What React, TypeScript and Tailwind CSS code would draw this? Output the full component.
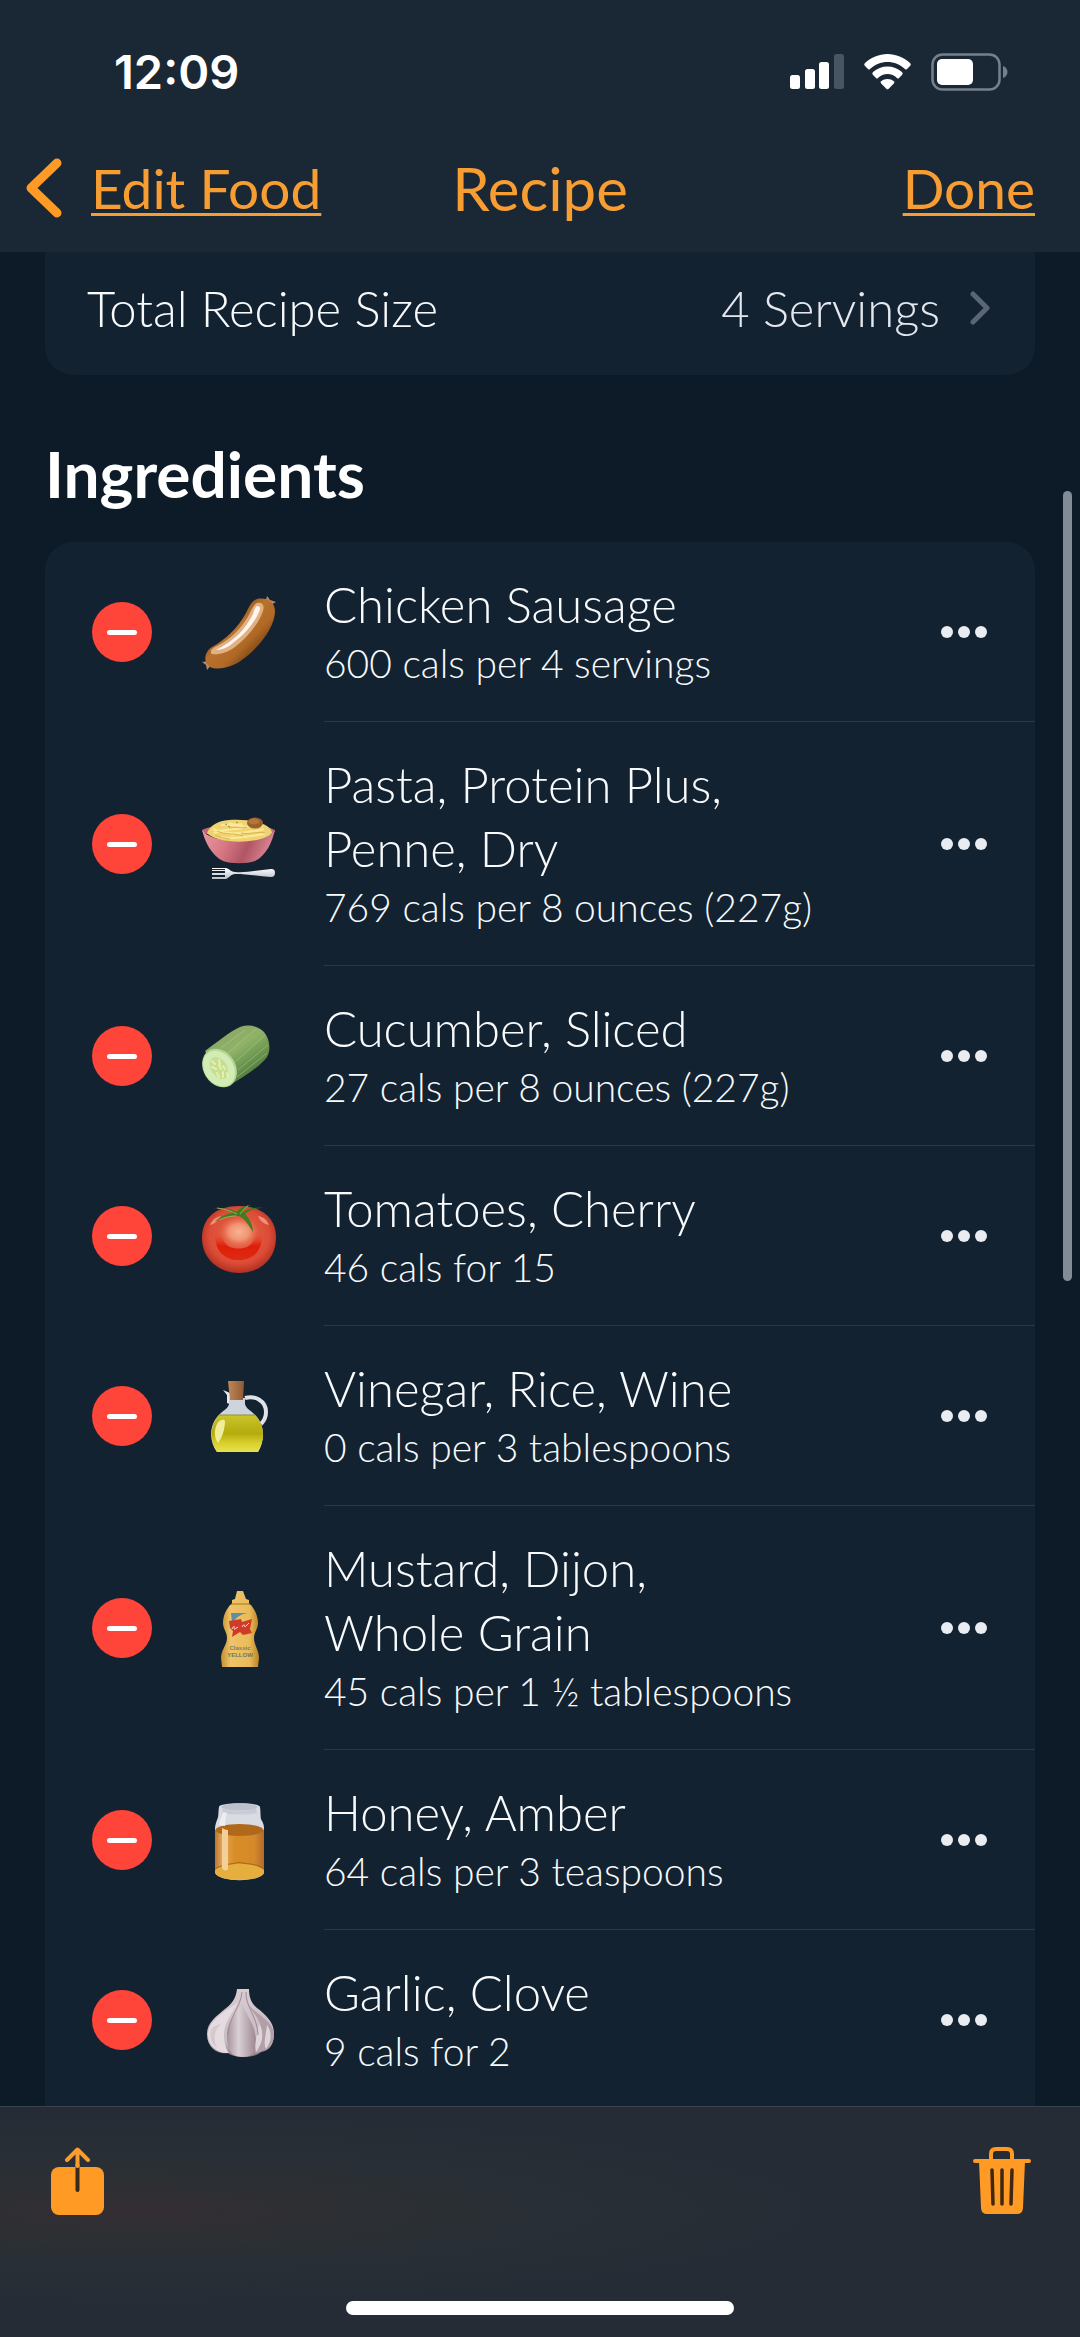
import { ReactNode, useState } from "react";

interface Ingredient {
  id: number;
  lines: string[];
  amount: string;
  icon: ReactNode;
}

const SausageIcon = () => (
  <svg viewBox="0 0 76 76" className="h-[76px] w-[76px]" aria-hidden="true">
    <defs>
      <linearGradient id="sausage" x1="0.25" y1="0.25" x2="0.8" y2="0.8">
        <stop offset="0" stopColor="#7a4517" />
        <stop offset="0.35" stopColor="#b9722c" />
        <stop offset="0.65" stopColor="#b06a26" />
        <stop offset="1" stopColor="#6d3a10" />
      </linearGradient>
    </defs>
    <path d="M64 9 66 2l3 4 6 2-7 4zM8 67l-7 1 4 3 1 5 5-6z" fill="#b98a6c" />
    <path d="M56 5c10-2 18 3 18 12 0 14-12 32-29 46-12 10-27 14-36 10-7-4-6-15 2-20C25 45 36 35 45 19c3-6 5-12 11-14z" fill="url(#sausage)" />
    <path d="M56 9c5-1 8 2 6 8-4 12-15 26-28 36-8 6-17 8-23 7-3-2 0-6 5-8 14-7 25-18 33-33 2-4 4-9 7-10z" fill="#e0b184" />
    <path d="M56 12c3 0 4 2 2 6-5 12-15 23-26 31-6 5-12 7-17 7 18-9 29-20 37-36 1-3 2-7 4-8z" fill="#fff6ee" />
  </svg>
);

const PastaIcon = () => (
  <svg viewBox="0 0 76 76" className="h-[76px] w-[76px]" aria-hidden="true">
    <defs>
      <linearGradient id="bowl" x1="0" y1="0" x2="1" y2="0.2">
        <stop offset="0" stopColor="#e99aa3" />
        <stop offset="0.4" stopColor="#d67782" />
        <stop offset="0.7" stopColor="#b05564" />
        <stop offset="1" stopColor="#d88591" />
      </linearGradient>
      <linearGradient id="fork" x1="0" y1="0" x2="0" y2="1">
        <stop offset="0" stopColor="#ffffff" />
        <stop offset="1" stopColor="#b9bfcb" />
      </linearGradient>
    </defs>
    <ellipse cx="37.500" cy="25" rx="36.500" ry="6" fill="#c06a76" />
    <path d="M1 23c2 12 10 27 21 32 8 3 24 3 32 0 11-5 18-20 20-32-5 16-68 16-73 0z" fill="url(#bowl)" />
    <path d="M6 27c3-8 11-12 22-13 10-1 22 0 31 3 7 2 12 6 12 10-9 11-55 12-65 0z" fill="#efd370" />
    <path d="M13 27c10-5 20-3 29-5M20 31c14 3 29-1 44-3M20 19c10-2 22 4 42 1M12 23c9 4 24 6 40 2M30 29c8-3 23-2 33-6M28 17c4 2 9 2 13 1" fill="none" stroke="#fbe898" strokeWidth="2" />
    <path d="M16 25c8 4 17 2 26 5M40 27c8 2 16-2 24 0M28 22c6-2 12 1 18-1M14 29c6 3 10 3 15 4" fill="none" stroke="#d9b751" strokeWidth="1" />
    <path d="m24 18 2 1m9-3 2 1m-10 3 2 1" stroke="#8f8f4a" strokeWidth="1" />
    <ellipse cx="54" cy="17" rx="8" ry="5.500" fill="#99602c" />
    <ellipse cx="53" cy="15.500" rx="5.500" ry="3" fill="#b0763a" />
    <path d="M11 62h14c4 1 5 4 9 4 12 1 24-2 36-3 3 0 4 1 4 4 0 2-1 4-4 4-12-1-24-3-36-3-4 0-6 4-9 5H11v-2h13v-2H11v-2h13v-2H11v-1h13v-1H11z" fill="url(#fork)" />
  </svg>
);

const CucumberIcon = () => (
  <svg viewBox="0 0 76 76" className="h-[76px] w-[76px]" aria-hidden="true">
    <defs>
      <linearGradient id="cucumber" x1="0.3" y1="0.1" x2="0.8" y2="0.8">
        <stop offset="0" stopColor="#8aa866" />
        <stop offset="0.4" stopColor="#8fb268" />
        <stop offset="0.7" stopColor="#6c9650" />
        <stop offset="1" stopColor="#4a7639" />
      </linearGradient>
    </defs>
    <path d="M4 33C14 26 29 13 39 9c9-3 18-1 24 5 6 7 7 18 3 25C58 50 40 60 28 68z" fill="url(#cucumber)" />
    <path d="M20 30 44 12M27 35l28-24M34 44l30-27M37 52l30-25M36 59l30-24" fill="none" stroke="#b4cf8a" strokeWidth="1" strokeOpacity="0.5" />
    <ellipse cx="18.500" cy="50" rx="16" ry="20.500" transform="rotate(-32 18.500 50)" fill="#b5d79b" />
    <ellipse cx="18" cy="50.500" rx="14.500" ry="19" transform="rotate(-32 18 50.500)" fill="#d3ecb6" />
    <ellipse cx="18" cy="50" rx="8" ry="12" transform="rotate(-32 18 50)" fill="#c4df95" />
    <path d="m11 43 3 3m4-4 1 4m-8 3 4 2m7-3 2 3m-8 4 2 4m4-5v5m4-4 1 4m-9-12 2 4" stroke="#e6f0a8" strokeWidth="2" strokeLinecap="round" />
  </svg>
);

const TomatoIcon = () => (
  <svg viewBox="0 0 76 76" className="h-[76px] w-[76px]" aria-hidden="true">
    <defs>
      <radialGradient id="tomato" cx="0.5" cy="0.45" r="0.58">
        <stop offset="0" stopColor="#e8684c" />
        <stop offset="0.7" stopColor="#dc4c36" />
        <stop offset="1" stopColor="#a92a1e" />
      </radialGradient>
      <radialGradient id="tomatoShine" cx="0.5" cy="0.5" r="0.5">
        <stop offset="0" stopColor="#f7b390" />
        <stop offset="0.5" stopColor="#f19474" />
        <stop offset="1" stopColor="#e8684c" stopOpacity="0" />
      </radialGradient>
      <linearGradient id="tomatoRing" x1="0" y1="0" x2="0" y2="1">
        <stop offset="0" stopColor="#e2543b" stopOpacity="0" />
        <stop offset="0.5" stopColor="#e01e08" />
        <stop offset="1" stopColor="#dd2a12" />
      </linearGradient>
    </defs>
    <path d="M38 8c24 0 37 13 37 31 0 23-17 36-37 36S1 61 1 40C1 20 15 8 38 8z" fill="url(#tomato)" />
    <path d="M14 34c5 0 7 4 9 9 3 10 26 10 29 0 1-5 4-9 9-9 1 16-6 28-23 28S13 50 14 34z" fill="url(#tomatoRing)" />
    <ellipse cx="38" cy="34" rx="20" ry="16" fill="url(#tomatoShine)" />
    <path d="M9 27c2-5 6-8 11-9-2 4-6 8-11 9zM57 18c6 1 9 4 11 9-5-1-9-4-11-9z" fill="#ef9078" />
    <path d="M11 10c9 0 18 0 25 4 1-3 6-6 14-7-5 2-8 5-9 8 6-5 13-6 22-5-9 0-15 2-19 6 5 5 8 12 8 18-4-7-9-14-14-16-8-2-16 2-24 6 5-6 12-8 18-9-7-4-14-5-21-5z" fill="#3f7d22" />
    <path d="M16 10c8 1 14 3 20 6m-18 6c6-3 12-4 17-4m4-2c3-4 5-6 8-8" fill="none" stroke="#8bb552" strokeWidth="1" />
  </svg>
);

const VinegarIcon = () => (
  <svg viewBox="0 0 76 76" className="h-[76px] w-[76px]" aria-hidden="true">
    <defs>
      <linearGradient id="oil" x1="0" y1="0" x2="0" y2="1">
        <stop offset="0" stopColor="#c9c52c" />
        <stop offset="0.5" stopColor="#b5ab0d" />
        <stop offset="0.75" stopColor="#d8cf2d" />
        <stop offset="1" stopColor="#e7e24c" />
      </linearGradient>
      <linearGradient id="cork" x1="0" y1="0" x2="1" y2="0">
        <stop offset="0" stopColor="#c08758" />
        <stop offset="1" stopColor="#8f5a34" />
      </linearGradient>
    </defs>
    <path d="M44 20c10-3 21 3 21 14 0 5-2 9-5 12" fill="none" stroke="#dfe4ea" strokeWidth="4" />
    <path d="m22 12 7 3v11l-3-1v-8z" fill="#e8edf3" />
    <path d="M28 20h16v6c1 5 7 7 11 12 9 10 9 24 2 36H16C8 63 8 48 17 38c4-5 10-7 11-12z" fill="#cdd4dd" />
    <path d="M18 37h36c10 10 10 25 3 37H16C8 62 9 47 18 37z" fill="url(#oil)" />
    <path d="M18 37h36" stroke="#8e9231" strokeWidth="1" />
    <path d="M16 46c3-5 7-5 8-3 0 8-3 17-7 22-4-5-4-13-1-19z" fill="#f0ee9b" />
    <path d="M27 3h16l-1 19H29z" fill="url(#cork)" />
  </svg>
);

const MustardIcon = () => (
  <svg viewBox="0 0 76 76" className="h-[76px] w-[76px] overflow-visible" aria-hidden="true">
    <defs>
      <linearGradient id="mustard" x1="0" y1="0" x2="1" y2="0">
        <stop offset="0" stopColor="#c38e2d" />
        <stop offset="0.25" stopColor="#efc468" />
        <stop offset="0.75" stopColor="#e9bb5a" />
        <stop offset="1" stopColor="#b88325" />
      </linearGradient>
    </defs>
    <path d="M36 1h6l3 8 3 1v4l2 1c4 5 7 11 7 18 0 6-4 9-4 15 0 7 5 12 5 20l-1 9H21l-1-9c0-8 6-13 6-20 0-6-4-9-4-15 0-7 3-13 7-18l2-1v-4l3-1z" fill="url(#mustard)" />
    <path d="M30 14h19" stroke="#a87622" strokeWidth="1" />
    <path d="M30 23h17c-8 1-12 5-16 10z" fill="#5f8da6" />
    <path d="m28 31 12-2 1 3 10-3-2 10 2 4-9 2-3-3-8 5 1-6-3-3z" fill="#cf3b28" />
    <path d="M31 39c4-7 1 2 3 0l3-2m4 0c4-6 1 2 4-1l3-3" fill="none" stroke="#f6d8c8" strokeWidth="1" />
    <text x="39" y="60" textAnchor="middle" fontFamily="Liberation Sans, sans-serif" fontSize="6" fontWeight="700" fill="#7d7c60">Classic</text>
    <text x="39" y="67" textAnchor="middle" fontFamily="Liberation Sans, sans-serif" fontSize="6" fontWeight="700" fill="#6c7668">YELLOW</text>
  </svg>
);

const HoneyIcon = () => (
  <svg viewBox="0 0 76 76" className="h-[76px] w-[76px] overflow-visible" aria-hidden="true">
    <defs>
      <linearGradient id="honey" x1="0" y1="0" x2="1" y2="0">
        <stop offset="0" stopColor="#b8772e" />
        <stop offset="0.15" stopColor="#e7a85a" />
        <stop offset="0.4" stopColor="#d98d26" />
        <stop offset="0.8" stopColor="#d58a2a" />
        <stop offset="1" stopColor="#b06b2a" />
      </linearGradient>
    </defs>
    <path d="M18 5c0-5 41-5 41 0 1 8 0 11 2 14 2 4 2 5 2 8v43c-2 11-47 11-49 0V27c0-4 1-6 2-9 2-4 1-7 2-13z" fill="#dadce3" />
    <ellipse cx="38.500" cy="5" rx="18" ry="3.500" fill="#bcc1cb" />
    <path d="M22 6c8 4 26 4 33 0l1 5c-9 2-26 2-35 0z" fill="#c8ccd5" />
    <path d="M14 28h49v42c-2 10-47 10-49 0z" fill="url(#honey)" />
    <ellipse cx="38.500" cy="28" rx="24" ry="6" fill="#b0691a" />
    <path d="M14 68c8-8 41-8 49 0v3c-3 9-46 9-49 0z" fill="#e6ae3d" />
    <path d="M14 67c8-5 17-5 21-6 2-1 4-1 6 0 8 1 15 1 22 6" fill="none" stroke="#a5661b" strokeWidth="1" />
    <path d="M21 26c2 1 4 2 6 2v38c0 4-6 3-6-1z" fill="#f3cf9a" />
    <path d="M22 10c-1 6-4 8-4 13l6 1c1-5 0-8 2-13z" fill="#eceef2" />
  </svg>
);

const GarlicIcon = () => (
  <svg viewBox="0 0 76 76" className="h-[76px] w-[76px]" aria-hidden="true">
    <defs>
      <linearGradient id="garlic" x1="0" y1="0" x2="0" y2="1">
        <stop offset="0" stopColor="#d9cdd2" />
        <stop offset="0.5" stopColor="#cdbfc6" />
        <stop offset="0.8" stopColor="#c5bcc1" />
        <stop offset="1" stopColor="#8a6f78" />
      </linearGradient>
      <linearGradient id="clove" x1="0" y1="0" x2="1" y2="0">
        <stop offset="0" stopColor="#a8929b" />
        <stop offset="0.4" stopColor="#d9d0d5" />
        <stop offset="1" stopColor="#9d8791" />
      </linearGradient>
    </defs>
    <path d="M36 7h12c0 8 2 14 8 19 8 6 17 14 17 25 0 10-4 18-13 19-6 6-26 7-33 1C17 73 6 66 6 52c0-12 10-18 18-25 7-5 11-11 12-20z" fill="url(#garlic)" />
    <path d="M37 20c-3 9-14 18-14 33 0 8 2 14 5 18C17 72 8 65 7 53c0-10 8-17 17-24 6-4 9-5 13-9z" fill="#e4dce0" />
    <path d="M20 42c-7 6-8 15-4 24-6-4-8-12-6-18 2-4 6-5 10-6z" fill="#d3c9ce" />
    <path d="M41 22c-6 8-15 17-15 32 0 9 2 14 5 18 5 4 17 4 21 0 3-6 4-13 2-21-2-11-9-19-13-29z" fill="url(#clove)" />
    <path d="M47 22c4 9 14 15 14 31 0 8-3 14-8 18 9-1 7-2 9-3 8-1 11-8 11-16-1-14-19-20-26-30z" fill="#b39fa8" />
    <path d="M58 42c6 9 3 20-3 28-2-9 1-15 3-28zM66 43c5 7 5 16-1 24-3-6 0-14 1-24z" fill="#ded5da" />
    <path d="M41 10c-1 15-14 26-14 43m18-43c-1 14 12 26 12 43" fill="none" stroke="#a08995" strokeWidth="1" />
  </svg>
);

const initialIngredients: Ingredient[] = [
  { id: 1, lines: ["Chicken Sausage"], amount: "600 cals per 4 servings", icon: <SausageIcon /> },
  { id: 2, lines: ["Pasta, Protein Plus,", "Penne, Dry"], amount: "769 cals per 8 ounces (227g)", icon: <PastaIcon /> },
  { id: 3, lines: ["Cucumber, Sliced"], amount: "27 cals per 8 ounces (227g)", icon: <CucumberIcon /> },
  { id: 4, lines: ["Tomatoes, Cherry"], amount: "46 cals for 15", icon: <TomatoIcon /> },
  { id: 5, lines: ["Vinegar, Rice, Wine"], amount: "0 cals per 3 tablespoons", icon: <VinegarIcon /> },
  { id: 6, lines: ["Mustard, Dijon,", "Whole Grain"], amount: "45 cals per 1 ½ tablespoons", icon: <MustardIcon /> },
  { id: 7, lines: ["Honey, Amber"], amount: "64 cals per 3 teaspoons", icon: <HoneyIcon /> },
  { id: 8, lines: ["Garlic, Clove"], amount: "9 cals for 2", icon: <GarlicIcon /> },
];

function StatusBar() {
  return (
    <div className="flex h-[104px] items-center justify-between pr-[72px] pl-[114px]">
      <span className="font-['Inter',sans-serif] text-[47px] leading-[58px] font-semibold text-white">12:09</span>
      <div className="flex items-center gap-5">
        <svg viewBox="0 0 54 36" className="h-9 w-[54px]" fill="#fff" aria-label="Signal">
          <rect x="0" y="21" width="10" height="14" rx="2.500" />
          <rect x="15" y="15" width="10" height="20" rx="2.500" />
          <rect x="29" y="8" width="10" height="27" rx="2.500" />
          <rect x="44" y="0" width="10" height="35" rx="2.500" fill="#475562" />
        </svg>
        <svg viewBox="0 0 47 36" className="h-9 w-[47px]" fill="#fff" aria-label="Wi-Fi">
          <path d="M23.500 0C32 0 40 3.500 46 9q1.500 1.500 0 3l-3 3q-1 1-2 0C36 10.500 30 8 23.500 8S11 10.500 6 15q-1 1-2 0l-3-3q-1.500-1.500 0-3C7 3.500 15 0 23.500 0z" />
          <path d="M23.500 12.500c5.500 0 10.500 2 14.500 5.500q1.500 1.500 0 3l-3 3q-1 1-2 0c-2.500-2.500-6-4-9.500-4s-7 1.500-9.500 4q-1 1-2 0l-3-3q-1.500-1.500 0-3c4-3.500 9-5.500 14.500-5.500z" />
          <path d="M23.500 25c2.500 0 4.500.800 6.300 2.200q1.200 1 0 2.300l-5.100 5.200q-1.200 1.200-2.400 0l-5.100-5.200q-1.200-1.300 0-2.300C19 25.800 21 25 23.500 25z" />
        </svg>
        <svg viewBox="0 0 77 38" className="h-[38px] w-[77px]" aria-label="Battery">
          <rect x="1.500" y="1.500" width="67" height="35" rx="10" fill="none" stroke="#75808a" strokeWidth="2.500" />
          <path d="M72 13c6 2 6 10 0 12z" fill="#75808a" />
          <rect x="6" y="6" width="36" height="26" rx="5" fill="#fff" />
        </svg>
      </div>
    </div>
  );
}

function IngredientRow({ item, onRemove }: { item: Ingredient; onRemove: (id: number) => void }) {
  return (
    <li className="group flex items-stretch pl-[47px]">
      <button
        type="button"
        aria-label={"Remove " + item.lines.join(" ")}
        onClick={() => onRemove(item.id)}
        className="flex h-[60px] w-[60px] shrink-0 items-center justify-center self-center rounded-full bg-[#ff443a]"
      >
        <span className="h-[5px] w-[30px] rounded-full bg-white" />
      </button>
      <div className="mr-[47px] ml-[49px] shrink-0 self-center">{item.icon}</div>
      <div className="flex flex-1 items-center border-b border-[#2b3845] pr-[48px] group-last:border-transparent">
        <div className="flex-1 pt-[30px] pb-[31px]">
          <h3 className="text-[49px] leading-[64px] font-light">
            {item.lines.map((line) => (
              <span key={line} className="block">
                {line}
              </span>
            ))}
          </h3>
          <p className="text-[39px] leading-[54px] font-light">{item.amount}</p>
        </div>
        <button type="button" aria-label="More" className="flex gap-[5px]">
          <span className="h-3 w-3 rounded-full bg-[#e9edf1]" />
          <span className="h-3 w-3 rounded-full bg-[#e9edf1]" />
          <span className="h-3 w-3 rounded-full bg-[#e9edf1]" />
        </button>
      </div>
    </li>
  );
}

export default function App() {
  const [ingredients, setIngredients] = useState<Ingredient[]>(initialIngredients);

  const remove = (id: number) => {
    setIngredients(ingredients.filter((item) => item.id !== id));
  };

  return (
    <div className="relative flex h-screen flex-col bg-[#0d1a28] font-['Lato',sans-serif] text-[#f8fafc]">
      <header className="bg-[#1a2836] pt-5 text-[#f79d31]">
        <StatusBar />
        <nav className="grid h-32 grid-cols-[1fr_auto_1fr] items-center px-[26px]">
          <a href="#food" className="flex items-center gap-[29px] text-[55px] leading-[64px] underline decoration-3 underline-offset-[4px] [text-decoration-skip-ink:none]">
            <svg viewBox="0 0 36 60" className="h-[60px] w-9" fill="none" stroke="#ff9a24" strokeWidth="9" strokeLinecap="round" strokeLinejoin="round" aria-hidden="true">
              <path d="M31 5 5 30l26 25" />
            </svg>
            Edit Food
          </a>
          <h1 className="text-[60px] leading-[64px]">Recipe</h1>
          <button type="button" className="mr-[19px] justify-self-end text-[55px] leading-[64px] underline decoration-3 underline-offset-[4px] [text-decoration-skip-ink:none]">
            Done
          </button>
        </nav>
      </header>

      <main className="min-h-0 flex-1 overflow-y-auto px-[45px] [scrollbar-width:none]">
        <button type="button" className="flex w-full items-center rounded-b-[28px] bg-[#132231] pt-[24px] pr-[45px] pb-[35px] pl-[42px] text-[49px] leading-[64px] font-light">
          <span>Total Recipe Size</span>
          <span className="ml-auto text-[#e4e8ee]">4 Servings</span>
          <svg viewBox="0 0 20 34" className="ml-[30px] h-[34px] w-5" fill="none" stroke="#5a6673" strokeWidth="5" strokeLinecap="round" strokeLinejoin="round" aria-hidden="true">
            <path d="m3 3 14 14L3 31" />
          </svg>
        </button>
        <h2 className="pt-[63px] pb-8 text-[64px] leading-[72px] font-bold text-white">Ingredients</h2>
        <ul className="rounded-t-[28px] bg-[#132231]">
          {ingredients.map((item) => (
            <IngredientRow key={item.id} item={item} onRemove={remove} />
          ))}
        </ul>
      </main>

      <div className="absolute top-[21%] right-2 h-[790px] w-[9px] rounded-full bg-[#828b96]" />

      <footer className="flex flex-col items-center border-t border-[#38424c] bg-[#252c35] bg-[radial-gradient(ellipse_at_13%_45%,#342d32_0%,#2e2f33_12%,#292f35_28%,#252c35_55%)] pt-10 pb-[22px]">
        <div className="flex w-full justify-between pr-[49px] pl-[51px]">
          <button type="button" aria-label="Share">
            <svg viewBox="0 0 53 68" className="h-[68px] w-[53px]" fill="none" strokeLinecap="round" strokeLinejoin="round">
              <rect x="0" y="20" width="53" height="48" rx="8" fill="#ff9a24" />
              <path d="M26.500 20v23" stroke="#3a2a1c" strokeWidth="4" />
              <path d="M26.500 19V3M16 13 26.500 2.500 37 13" stroke="#f79d31" strokeWidth="4" />
              <path d="M26.500 17v3" stroke="#f79d31" strokeWidth="4" strokeLinecap="butt" />
            </svg>
          </button>
          <button type="button" aria-label="Delete">
            <svg viewBox="0 0 58 68" className="h-[68px] w-[58px]" fill="none" strokeLinecap="round">
              <path d="M18 13V7q0-5 5-5h11q5 0 5 5v6" stroke="#ff9a24" strokeWidth="4" />
              <path d="M2 14h54" stroke="#ff9a24" strokeWidth="4" />
              <path d="M6 14h46l-2 47q-.500 6-6 6H14q-5.500 0-6-6z" fill="#ff9a24" />
              <path d="m19 23 1 34m9-34v34m10-34-1 34" stroke="#3f2710" strokeWidth="3.500" />
            </svg>
          </button>
        </div>
        <div className="mt-[86px] h-[14px] w-[36%] rounded-full bg-white" />
      </footer>
    </div>
  );
}
